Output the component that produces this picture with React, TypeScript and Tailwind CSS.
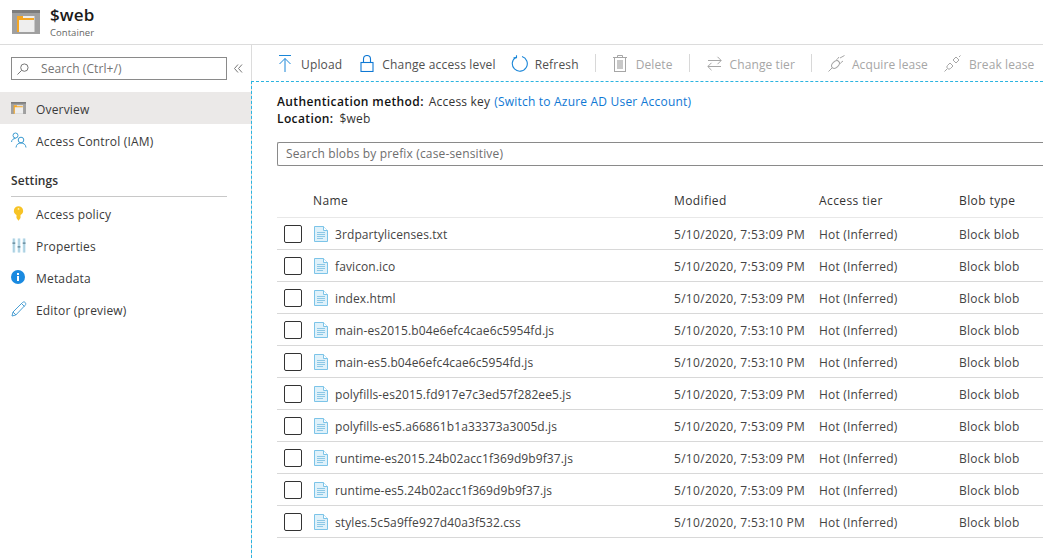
import React from "react";

const FONT = "font-['Open_Sans','Noto_Sans',sans-serif]";

const ContainerIcon = ({ size }: { size: number }) => (
  <svg width={size} height={size * 0.857} viewBox="0 0 28 24">
    <rect x="0" y="0" width="28" height="24" fill="#a0a0a0" />
    <path d="M0 0h28v3H0z" fill="#7d7d7d" />
    <rect x="6" y="6" width="16.5" height="16" fill="#eeeeee" />
    <path d="M5 6h6v2h11v2H7v12H5z" fill="#f5a623" />
  </svg>
);

const UsersIcon = () => (
  <svg width="16" height="16" viewBox="0 0 16 16" fill="none" stroke="#3b9bd1" strokeWidth="1">
    <circle cx="4.500" cy="3.500" r="2.500" />
    <path d="M0.500 10c.3-2.500 2-3.500 4-3.500" />
    <circle cx="10" cy="8" r="2.800" />
    <path d="M5 15.500c.3-3 2.300-4.500 5-4.500s4.700 1.500 5 4.500" />
  </svg>
);

const KeyIcon = () => (
  <svg className="ml-[2px]" width="11" height="15" viewBox="0 0 12 16">
    <path d="M6 0a5 5 0 0 1 2.200 9.500V13l-2.200 3-2.200-3V9.500A5 5 0 0 1 6 0z" fill="#f7c325" />
    <circle cx="6" cy="3" r="1" fill="#fff2b0" />
  </svg>
);

const SlidersIcon = () => (
  <svg className="ml-px" width="14" height="15" viewBox="0 0 15 15">
    <rect x="0.500" y="0" width="3" height="15" fill="#c5e6f4" />
    <rect x="6" y="0" width="3" height="15" fill="#c5e6f4" />
    <rect x="11.500" y="0" width="3" height="15" fill="#c5e6f4" />
    <path d="M2 0v15M7.500 0v15M13 0v15" stroke="#8fb4c6" strokeWidth="0.700" />
    <path d="M0.500 5h3M6 9h3M11.500 5h3" stroke="#5c7f90" strokeWidth="1.200" />
  </svg>
);

const InfoIcon = () => (
  <svg width="14" height="14" viewBox="0 0 14 14">
    <circle cx="7" cy="7" r="7" fill="#1a8ae0" />
    <rect x="6" y="6" width="2" height="5" fill="#fff" />
    <rect x="6" y="3" width="2" height="2" fill="#fff" />
  </svg>
);

const PencilIcon = () => (
  <svg width="16" height="16" viewBox="0 0 16 16" fill="none" stroke="#4a9fd4" strokeWidth="1">
    <path d="M1 15l1-4L11.500 1.500c.8-.8 2-.8 2.700 0s.8 1.900 0 2.700L4.800 14z" />
    <path d="M2 11l3 3M10.500 2.500l3 3" />
  </svg>
);

const FileIcon = () => (
  <svg width="14" height="16" viewBox="0 0 14 16">
    <path d="M0.500 0.500h9l4 4v11H0.500z" fill="#dff1fa" stroke="#7cc4e8" />
    <path d="M9.500 0.500v4h4" fill="#fff" stroke="#7cc4e8" />
    <path d="M3 6.500h8M3 8.500h8M3 10.500h8M3 12.500h6" stroke="#8cc8e6" />
  </svg>
);

const UploadIcon = () => (
  <svg width="14" height="17" viewBox="0 0 14 17" fill="none" stroke="#1a86d8" strokeWidth="1">
    <path d="M1 0.500h12M7 3.500V17M1.500 9L7 3.500 12.500 9" />
  </svg>
);

const LockIcon = () => (
  <svg width="14" height="17" viewBox="0 0 14 17" fill="none" stroke="#0f78d4" strokeWidth="1.100">
    <rect x="1" y="7.500" width="12" height="9" />
    <path d="M3.500 7.500V4a3.500 3.500 0 0 1 7 0v3.500" />
  </svg>
);

const RefreshIcon = () => (
  <svg width="17" height="17" viewBox="0 0 17 17" fill="none" stroke="#1a86d8" strokeWidth="1.100">
    <path d="M5 2.200A7.500 7.500 0 1 0 11 1.500" />
    <path d="M5.500 0.500V3H2.500" transform="translate(0 -0.200)" />
  </svg>
);

const TrashIcon = () => (
  <svg width="14" height="17" viewBox="0 0 14 17" fill="none" stroke="#a6a6a6">
    <path d="M0 2.500h14M4.500 2.500v-2h5v2" />
    <rect x="1.500" y="2.500" width="11" height="14" />
    <rect x="4" y="5" width="6" height="9" fill="#c8c8c8" stroke="none" />
  </svg>
);

const SwapIcon = () => (
  <svg width="15" height="15" viewBox="0 0 15 15" fill="none" stroke="#a6a6a6">
    <path d="M1 4.500h13M10.500 0.800l3.700 3.700-3.700 3.700M14 10.500H1M4.500 6.800L0.800 10.500l3.700 3.700" />
  </svg>
);

const PlugIcon = () => (
  <svg width="17" height="17" viewBox="0 0 17 17" fill="none" stroke="#a6a6a6">
    <path d="M0.500 16.500l3.500-3.500" />
    <ellipse cx="7.500" cy="9.500" rx="3" ry="4.500" transform="rotate(45 7.500 9.500)" />
    <path d="M8.500 4.500l4 4M9 4.500l2-2.500M12.500 8l2.500-2M12 3l4.500-2.500" />
  </svg>
);

const BreakIcon = () => (
  <svg width="17" height="17" viewBox="0 0 17 17" fill="none" stroke="#a6a6a6">
    <path d="M0.500 16.500l2.500-2.500" />
    <path d="M6 8l3 3-2.500 2.500a2.100 2.100 0 0 1-3-3z" />
    <path d="M10 7l-3-3 3-3 3 3z" transform="translate(2 1)" />
    <path d="M15 2l1.500-1.500" />
  </svg>
);

const SearchIcon = () => (
  <svg width="12" height="12" viewBox="0 0 13 13" fill="none" stroke="#6b6b6b">
    <circle cx="8" cy="5" r="4" />
    <path d="M5 8l-4.500 4.500" />
  </svg>
);

const ChevronsIcon = () => (
  <svg width="9" height="9" viewBox="0 0 9 9" fill="none" stroke="#777">
    <path d="M4 0.500L0.500 4.500 4 8.500M8 0.500L4.500 4.500 8 8.500" />
  </svg>
);

const NavItem = ({ icon, label, active }: { icon: React.ReactNode; label: string; active?: boolean }) => (
  <div className={`flex h-8 items-center ${active ? "bg-[#ebe9e8]" : ""}`}>
    <div className="ml-[11px] flex w-[25px] items-center">{icon}</div>
    <span className="pt-[4px] text-[12px] tracking-[0.18px] text-[#3a3a3a]">{label}</span>
  </div>
);

const ToolButton = ({ icon, label, disabled, gap, ml }: { icon: React.ReactNode; label: string; disabled?: boolean; gap: string; ml: string }) => (
  <div className={`flex shrink-0 items-center ${gap} ${ml}`}>
    {icon}
    <span className={`whitespace-nowrap pt-[4px] text-[12px] ${disabled ? "tracking-[0.1px] text-[#a6a6a6]" : "tracking-[0.16px] text-[#505050]"}`}>{label}</span>
  </div>
);

const Sep = ({ ml }: { ml: string }) => <div className={`h-[18px] w-px shrink-0 bg-[#d8d8d8] ${ml}`} />;

const rows = [
  ["3rdpartylicenses.txt", "5/10/2020, 7:53:09 PM"],
  ["favicon.ico", "5/10/2020, 7:53:09 PM"],
  ["index.html", "5/10/2020, 7:53:09 PM"],
  ["main-es2015.b04e6efc4cae6c5954fd.js", "5/10/2020, 7:53:10 PM"],
  ["main-es5.b04e6efc4cae6c5954fd.js", "5/10/2020, 7:53:10 PM"],
  ["polyfills-es2015.fd917e7c3ed57f282ee5.js", "5/10/2020, 7:53:09 PM"],
  ["polyfills-es5.a66861b1a33373a3005d.js", "5/10/2020, 7:53:09 PM"],
  ["runtime-es2015.24b02acc1f369d9b9f37.js", "5/10/2020, 7:53:09 PM"],
  ["runtime-es5.24b02acc1f369d9b9f37.js", "5/10/2020, 7:53:09 PM"],
  ["styles.5c5a9ffe927d40a3f532.css", "5/10/2020, 7:53:10 PM"],
];

export default function App() {
  return (
    <div className={`flex h-[558px] w-[1043px] flex-col overflow-hidden bg-white ${FONT}`}>
      <header className="flex h-[45px] shrink-0 items-center border-b border-[#dcdcdc] pl-3">
        <ContainerIcon size={28} />
        <div className="ml-[10px] flex flex-col">
          <span className="-mt-[2px] text-[17px] font-semibold leading-[22px] tracking-[0.1px] text-[#1a1a1a]">$web</span>
          <span className="mt-px text-[9.500px] leading-[12px] tracking-[0.05px] text-[#666]">Container</span>
        </div>
      </header>

      <div className="flex min-h-0 flex-1">
        <aside className="w-[251px] shrink-0">
          <div className="flex items-center pl-[11px] pt-3">
            <div className="flex h-[23px] w-[216px] items-center border border-[#8a8a8a] pl-[5px]">
              <SearchIcon />
              <span className="ml-3 text-[12px] tracking-[0.1px] text-[#757575]">Search (Ctrl+/)</span>
            </div>
            <div className="ml-[7px]">
              <ChevronsIcon />
            </div>
          </div>
          <div className="mt-3">
            <NavItem active icon={<ContainerIcon size={15} />} label="Overview" />
            <NavItem icon={<UsersIcon />} label="Access Control (IAM)" />
          </div>
          <div className="ml-[11px] mr-[24px] mt-4 border-b border-[#c8c8c8] pb-[7px] text-[12px] font-semibold leading-[17px] tracking-[0.1px] text-[#333]">
            Settings
          </div>
          <div>
            <NavItem icon={<KeyIcon />} label="Access policy" />
            <NavItem icon={<SlidersIcon />} label="Properties" />
            <NavItem icon={<InfoIcon />} label="Metadata" />
            <NavItem icon={<PencilIcon />} label="Editor (preview)" />
          </div>
        </aside>

        <div className="flex min-w-0 flex-1 flex-col border-l border-[#dcdcdc]">
          <div className="flex h-[36px] shrink-0 items-center overflow-hidden pl-[26px]">
            <ToolButton icon={<UploadIcon />} label="Upload" gap="gap-[9px]" ml="" />
            <ToolButton icon={<LockIcon />} label="Change access level" gap="gap-[8px]" ml="ml-[18px]" />
            <ToolButton icon={<RefreshIcon />} label="Refresh" gap="gap-[7px]" ml="ml-[15px]" />
            <Sep ml="ml-[16px]" />
            <ToolButton disabled icon={<TrashIcon />} label="Delete" gap="gap-[9px]" ml="ml-[17px]" />
            <Sep ml="ml-[16px]" />
            <ToolButton disabled icon={<SwapIcon />} label="Change tier" gap="gap-[8px]" ml="ml-[17px]" />
            <Sep ml="ml-[16px]" />
            <ToolButton disabled icon={<PlugIcon />} label="Acquire lease" gap="gap-[7px]" ml="ml-[16px]" />
            <ToolButton disabled icon={<BreakIcon />} label="Break lease" gap="gap-[8px]" ml="ml-[16px]" />
          </div>
          <div className="-ml-px flex min-h-0 flex-1 flex-col border-l border-t border-dashed border-[#2bb4e0] pl-[25px]">
            <div className="mt-[11px] text-[12px] leading-[17px] tracking-[0.2px] text-[#333]">
              <div>
                <span className="font-semibold tracking-[0.38px] text-[#111]">Authentication method:</span>
                <span className="ml-[5px]">Access key</span>
                <span className="ml-[4px] text-[#0f78d4]">(Switch to Azure AD User Account)</span>
              </div>
              <div>
                <span className="font-semibold tracking-[0.38px] text-[#111]">Location:</span>
                <span className="ml-[6px]">$web</span>
              </div>
            </div>
            <div className="mt-[15px] flex h-6 shrink-0 items-center rounded-l-[2px] border-y border-l border-[#8a8a8a] pl-2 text-[12px] tracking-[0.15px] text-[#6e6e6e]">
              Search blobs by prefix (case-sensitive)
            </div>
            <div className="mt-5 flex h-[32px] shrink-0 items-center border-b border-[#e8e8e8] pb-[2px] text-[12px] font-medium tracking-[0.4px] text-[#333]">
              <div className="w-[397px] pl-[36px]">Name</div>
              <div className="w-[145px]">Modified</div>
              <div className="w-[140px]">Access tier</div>
              <div>Blob type</div>
            </div>
            {rows.map(([name, modified]) => (
              <div key={name} className="flex h-[32px] shrink-0 items-center border-b border-[#d8d8d8] text-[12px] text-[#444]">
                <div className="ml-[7px] h-[18px] w-[18px] shrink-0 rounded-[2px] border border-[#333] bg-white" />
                <div className="ml-[12px] flex w-[360px] items-center">
                  <FileIcon />
                  <span className="ml-[7px] whitespace-nowrap pt-[2px] tracking-[0.1px]">{name}</span>
                </div>
                <div className="w-[145px] whitespace-nowrap pt-[2px] tracking-[0.3px]">{modified}</div>
                <div className="w-[140px] pt-[2px] tracking-[0.18px]">Hot (Inferred)</div>
                <div className="whitespace-nowrap pt-[2px] tracking-[0.25px]">Block blob</div>
              </div>
            ))}
          </div>
        </div>
      </div>
    </div>
  );
}
